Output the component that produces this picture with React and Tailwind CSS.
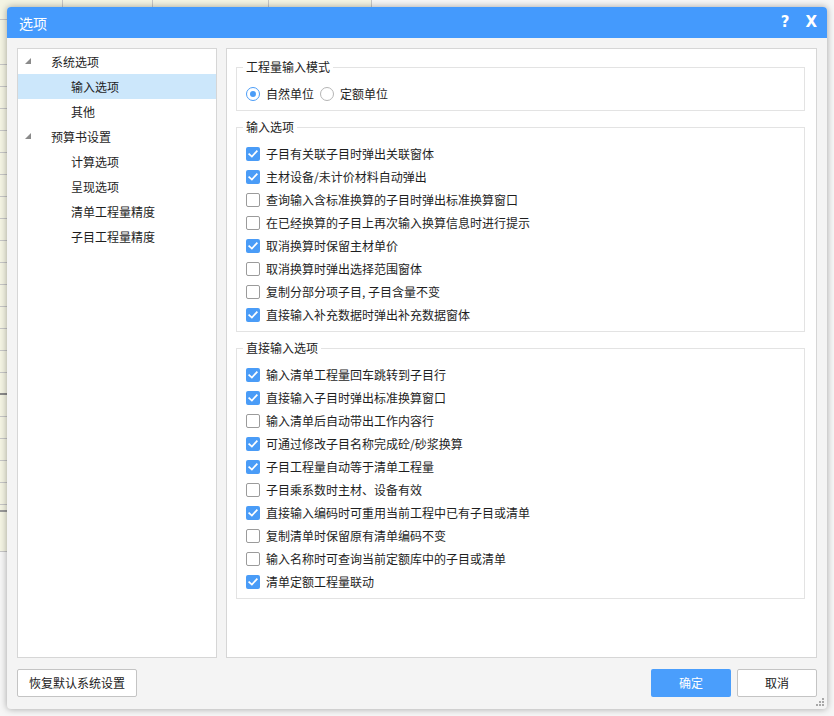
import React from "react";

const inputOpts = [
  ["子目有关联子目时弹出关联窗体", true],
  ["主材设备/未计价材料自动弹出", true],
  ["查询输入含标准换算的子目时弹出标准换算窗口", false],
  ["在已经换算的子目上再次输入换算信息时进行提示", false],
  ["取消换算时保留主材单价", true],
  ["取消换算时弹出选择范围窗体", false],
  ["复制分部分项子目, 子目含量不变", false],
  ["直接输入补充数据时弹出补充数据窗体", true],
];

const directOpts = [
  ["输入清单工程量回车跳转到子目行", true],
  ["直接输入子目时弹出标准换算窗口", true],
  ["输入清单后自动带出工作内容行", false],
  ["可通过修改子目名称完成砼/砂浆换算", true],
  ["子目工程量自动等于清单工程量", true],
  ["子目乘系数时主材、设备有效", false],
  ["直接输入编码时可重用当前工程中已有子目或清单", true],
  ["复制清单时保留原有清单编码不变", false],
  ["输入名称时可查询当前定额库中的子目或清单", false],
  ["清单定额工程量联动", true],
];

const tree = [
  { label: "系统选项", level: 1 },
  { label: "输入选项", level: 2, selected: true },
  { label: "其他", level: 2 },
  { label: "预算书设置", level: 1 },
  { label: "计算选项", level: 2 },
  { label: "呈现选项", level: 2 },
  { label: "清单工程量精度", level: 2 },
  { label: "子目工程量精度", level: 2 },
];

function Checkbox({ checked }) {
  if (checked) {
    return (
      <span className="w-[14px] h-[14px] shrink-0 rounded-[2px] bg-[#4a9cf7] flex items-center justify-center">
        <svg width="10" height="8" viewBox="0 0 10 8">
          <path d="M1.2 4.2 L3.9 6.6 L8.8 1.2" stroke="#ffffff" strokeWidth="1.7" fill="none" strokeLinecap="square" />
        </svg>
      </span>
    );
  }
  return <span className="w-[14px] h-[14px] shrink-0 rounded-[2px] border border-[#9b9b9b] bg-white" />;
}

function Radio({ checked }) {
  return (
    <span
      className={
        "w-[14px] h-[14px] shrink-0 rounded-full border bg-white flex items-center justify-center " +
        (checked ? "border-[#4a9cf7]" : "border-[#b5b5b5]")
      }
    >
      {checked && <span className="w-[6px] h-[6px] rounded-full bg-[#4a9cf7]" />}
    </span>
  );
}

function Group({ title, children, className = "" }) {
  return (
    <fieldset className={"border border-[#e3e3e3] px-[6px] pt-[7px] pb-[5px] " + className}>
      <legend className="px-[3px] text-[12px] leading-4 text-[#222]">{title}</legend>
      <div className="pl-[3px] flex flex-col">{children}</div>
    </fieldset>
  );
}

function OptRow({ label, checked }) {
  return (
    <div className="h-[23px] flex items-center gap-[6px]">
      <Checkbox checked={checked} />
      <span className="text-[12px] leading-4 text-[#1e1e1e] whitespace-nowrap">{label}</span>
    </div>
  );
}

const bgRows = [
  { h: "h-[20px]", cls: "border-b border-[#c6c6c6]" },
  { h: "h-[45px]", cls: "border-b border-[#c6c6c6]" },
  ...Array.from({ length: 14 }, () => ({ h: "h-[22px]", cls: "border-b border-[#c6c6c6]" })),
  { h: "h-[22px]", cls: "border-b-2 border-[#8a8a8a] bg-[#a9c8e9]" },
  ...Array.from({ length: 5 }, () => ({ h: "h-[22px]", cls: "border-b border-[#c6c6c6]" })),
  { h: "h-[7px]", cls: "border-b-2 border-[#9a9a9a]" },
  { h: "h-[40px]", cls: "bg-[#e6e6e6] border-b border-[#c6c6c6]" },
];

export default function App() {
  return (
    <div className="relative w-[834px] h-[716px] overflow-hidden bg-[#f6f6f6] font-['Noto_Sans_CJK_SC','Microsoft_YaHei',sans-serif]">
      {/* background spreadsheet */}
      <div className="flex flex-col w-[372px]">
        {bgRows.map((r, i) => (
          <div key={i} className={"flex bg-[#f4f4e3] " + r.h + " " + r.cls}>
            <div className="w-[63px] border-r border-[#c6c6c6]" />
            <div className="w-[90px] border-r border-[#c6c6c6]" />
            <div className="w-[116px] border-r border-[#c6c6c6]" />
            <div className="w-[103px] border-r border-[#c6c6c6]" />
          </div>
        ))}
      </div>

      {/* dialog */}
      <div className="absolute left-[7px] top-[7px] w-[820px] h-[702px] bg-[#f4f4f4] rounded-[4px] shadow-[0_0_7px_rgba(0,0,0,0.35)] flex flex-col overflow-hidden">
        <div className="h-[31px] shrink-0 bg-[#449afd] flex items-center pl-[12px] pr-[10px] text-white">
          <span className="text-[14px] leading-none">选项</span>
          <span className="ml-auto text-[15px] font-bold font-['DejaVu_Sans',sans-serif] leading-none">?</span>
          <span className="ml-[16px] text-[15px] font-bold font-['DejaVu_Sans',sans-serif] leading-none">X</span>
        </div>

        <div className="flex-1 flex flex-col px-[10px] pt-[10px] pb-[12px]">
          <div className="flex-1 flex gap-[9px] min-h-0">
            {/* tree */}
            <div className="w-[200px] shrink-0 border border-[#d6d6d6] bg-white flex flex-col">
              {tree.map((t, i) => (
                <div
                  key={i}
                  className={
                    "h-[25px] flex items-center text-[12px] leading-4 text-[#1e1e1e] " +
                    (t.selected ? "bg-[#cce7fb]" : "")
                  }
                >
                  {t.level === 1 ? (
                    <>
                      <svg width="6" height="6" viewBox="0 0 6 6" className="ml-[7px] mr-[20px] -mt-[2px]">
                        <polygon points="6,0 6,6 0,6" fill="#8a8a8a" />
                      </svg>
                      <span>{t.label}</span>
                    </>
                  ) : (
                    <span className="pl-[53px]">{t.label}</span>
                  )}
                </div>
              ))}
            </div>

            {/* right panel */}
            <div className="flex-1 border border-[#d6d6d6] bg-white pl-[9px] pr-[11px] pt-[10px] flex flex-col">
              <Group title="工程量输入模式">
                <div className="h-[23px] flex items-center text-[12px] leading-4 text-[#1e1e1e]">
                  <Radio checked />
                  <span className="ml-[6px]">自然单位</span>
                  <span className="ml-[6px]">
                    <Radio />
                  </span>
                  <span className="ml-[6px]">定额单位</span>
                </div>
              </Group>

              <Group title="输入选项" className="mt-[8px]">
                {inputOpts.map(([l, c], i) => (
                  <OptRow key={i} label={l} checked={c} />
                ))}
              </Group>

              <Group title="直接输入选项" className="mt-[8px]">
                {directOpts.map(([l, c], i) => (
                  <OptRow key={i} label={l} checked={c} />
                ))}
              </Group>
            </div>
          </div>

          <div className="h-[28px] mt-[11px] flex shrink-0">
            <button className="w-[120px] h-[28px] bg-white border border-[#c4c4c4] rounded-[2px] text-[12px] leading-4 text-[#222]">
              恢复默认系统设置
            </button>
            <button className="ml-auto w-[80px] h-[28px] bg-[#4a9efc] rounded-[2px] text-[12px] leading-4 text-white">
              确定
            </button>
            <button className="ml-[6px] w-[80px] h-[28px] bg-white border border-[#c4c4c4] rounded-[2px] text-[12px] leading-4 text-[#222]">
              取消
            </button>
          </div>
        </div>

        {/* resize grip */}
        <svg width="8" height="8" viewBox="0 0 8 8" className="absolute right-[3px] bottom-[3px]">
          <rect x="6" y="0" width="2" height="2" fill="#a8a8a8" />
          <rect x="3" y="3" width="2" height="2" fill="#a8a8a8" />
          <rect x="6" y="3" width="2" height="2" fill="#a8a8a8" />
          <rect x="0" y="6" width="2" height="2" fill="#a8a8a8" />
          <rect x="3" y="6" width="2" height="2" fill="#a8a8a8" />
          <rect x="6" y="6" width="2" height="2" fill="#a8a8a8" />
        </svg>
      </div>
    </div>
  );
}
